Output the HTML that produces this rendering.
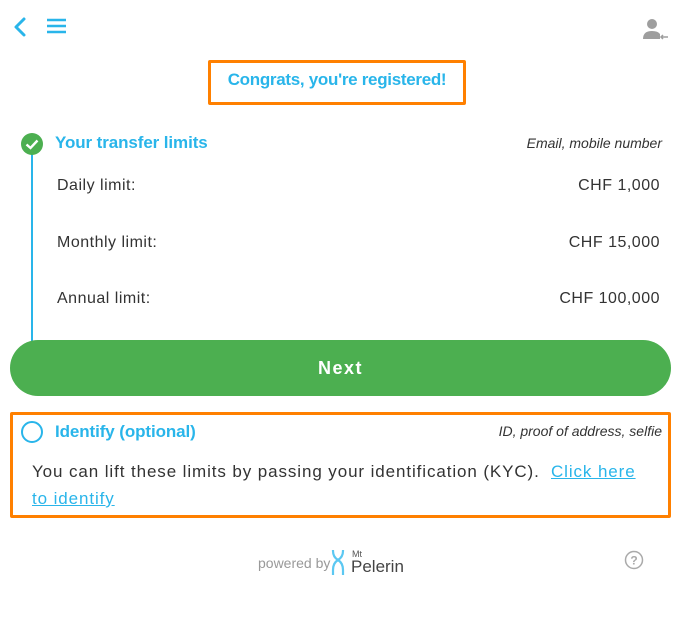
<!DOCTYPE html>
<html><head><meta charset="utf-8"><style>
*{margin:0;padding:0;box-sizing:border-box}
body{width:680px;height:630px;background:#fff;font-family:"Liberation Sans",sans-serif;position:relative;overflow:hidden;color:#333}
.a{position:absolute;white-space:nowrap}
.blue{color:#29b5ea}
.r{font-size:16px;letter-spacing:0.5px}
</style></head><body>
<svg class="a" style="left:10px;top:14px" width="62" height="26">
<path d="M14 5 L6 13 L14 21" fill="none" stroke="#29b5ea" stroke-width="3" stroke-linecap="round" stroke-linejoin="round"/>
<path d="M37 6H56M37 12H56M37 18H56" stroke="#29b5ea" stroke-width="2.5"/>
</svg>
<svg class="a" style="left:642px;top:18px" width="28" height="24">
<circle cx="10" cy="6" r="5" fill="#9e9e9e"/>
<path d="M1 21 Q1 13 10 13 Q16 13 18 16 L18 21Z" fill="#9e9e9e"/>
<path d="M26 19H19M21 17L19 19L21 21" stroke="#9e9e9e" stroke-width="1.5" fill="none"/>
</svg>
<div class="a" style="left:208px;top:60px;width:258px;height:45px;border:3px solid #ff8000;border-radius:2px"></div>
<div class="a blue" style="left:208px;top:70px;width:258px;text-align:center;font-size:17px;font-weight:bold;letter-spacing:-0.3px">Congrats, you're registered!</div>
<div class="a" style="left:31px;top:150px;width:2px;height:192px;background:#29b5ea"></div>
<svg class="a" style="left:20px;top:132px" width="24" height="24"><circle cx="12" cy="12" r="11" fill="#4caf50"/><path d="M6.5 12.5L10.5 16L17.5 8.5" stroke="#fff" stroke-width="2.4" fill="none"/></svg>
<div class="a blue" style="left:55px;top:133px;font-size:17px;font-weight:bold;letter-spacing:-0.1px">Your transfer limits</div>
<div class="a" style="right:18px;top:135px;font-size:14px;font-style:italic">Email, mobile number</div>
<div class="a r" style="left:57px;top:177px">Daily limit:</div>
<div class="a r" style="right:20px;top:177px">CHF 1,000</div>
<div class="a r" style="left:57px;top:234px">Monthly limit:</div>
<div class="a r" style="right:20px;top:234px">CHF 15,000</div>
<div class="a r" style="left:57px;top:290px">Annual limit:</div>
<div class="a r" style="right:20px;top:290px">CHF 100,000</div>
<div class="a" style="left:10px;top:340px;width:661px;height:56px;border-radius:28px;background:#4caf50;color:#fff;font-size:18px;font-weight:bold;letter-spacing:1.5px;text-align:center;line-height:56px">Next</div>
<div class="a" style="left:10px;top:412px;width:661px;height:106px;border:3px solid #ff8000;border-radius:2px"></div>
<svg class="a" style="left:20px;top:420px" width="24" height="24"><circle cx="12" cy="12" r="10" fill="none" stroke="#29b5ea" stroke-width="2"/></svg>
<div class="a blue" style="left:55px;top:422px;font-size:17px;font-weight:bold;letter-spacing:-0.1px">Identify (optional)</div>
<div class="a" style="right:18px;top:423px;font-size:14px;font-style:italic">ID, proof of address, selfie</div>
<div class="a" style="left:32px;top:458px;font-size:17px;line-height:27px;letter-spacing:0.9px;color:#333">You can lift these limits by passing your identification (KYC).&nbsp; <span class="blue" style="text-decoration:underline">Click here</span><br><span class="blue" style="text-decoration:underline">to identify</span></div>
<div class="a" style="left:258px;top:555px;font-size:14px;color:#999">powered by</div>
<svg class="a" style="left:331px;top:550px" width="14" height="26"><path d="M2 1 Q2 7 7 10 Q12 13 12 20 M12 1 Q12 7 7 10 Q2 13 2 20 M2 20V25M12 20V25M2 1V0M12 1V0" stroke="#5cc8f2" stroke-width="2.2" fill="none"/></svg>
<div class="a" style="left:352px;top:549px;font-size:9px;color:#555">Mt</div>
<div class="a" style="left:351px;top:557px;font-size:17px;color:#444">Pelerin</div>
<svg class="a" style="left:624px;top:550px" width="20" height="20"><circle cx="10" cy="10" r="8.5" fill="none" stroke="#aaa" stroke-width="1.5"/><text x="10" y="14.5" font-size="12" font-family="Liberation Sans" font-weight="bold" fill="#aaa" text-anchor="middle">?</text></svg>
</body></html>
